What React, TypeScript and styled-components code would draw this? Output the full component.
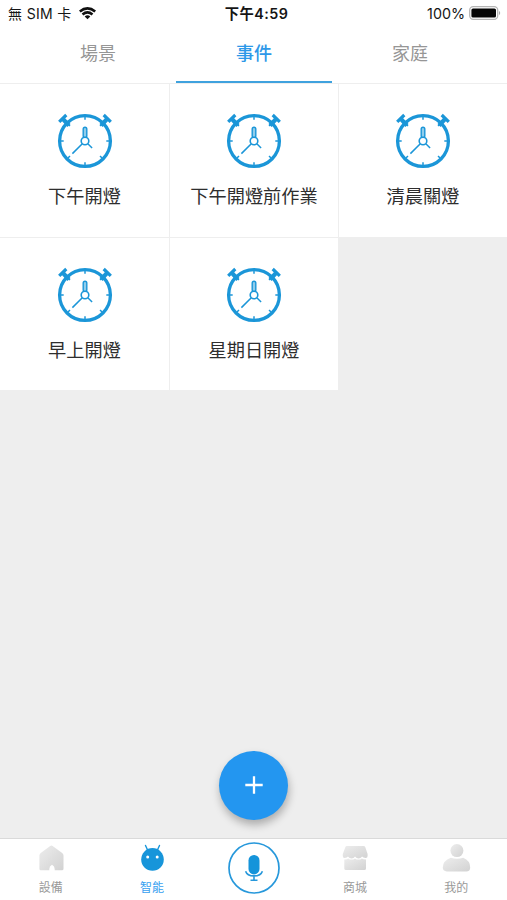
import React from "react";
import styled, { createGlobalStyle } from "styled-components";

const GlobalStyle = createGlobalStyle`
  *, *::before, *::after { box-sizing: border-box; }
  html, body { margin: 0; padding: 0; overflow: hidden; }
  body { font-family: Inter, "Noto Sans CJK TC", sans-serif; }
  svg { display: block; flex: none; }
`;

const Screen = styled.div`
  display: flex;
  flex-direction: column;
  width: 507px;
  height: 900px;
  background: #eeeeee;
`;

const StatusBar = styled.header`
  display: grid;
  grid-template-columns: 1fr auto 1fr;
  align-items: center;
  height: 28px;
  padding: 0 6px 0 8px;
  background: #fff;
  color: #151515;
  font-size: 14px;
  line-height: 28px;
  white-space: nowrap;
`;

const Carrier = styled.div`
  display: flex;
  align-items: center;
  gap: 7px;
  letter-spacing: 0.35px;
  svg { margin-top: -2px; }
`;

const Clock = styled.div`
  padding-left: 4px;
  font-weight: 600;
  font-size: 14.3px;
  letter-spacing: 0.45px;
`;

const Power = styled.div`
  display: flex;
  align-items: center;
  justify-content: flex-end;
  gap: 4px;
  font-size: 14.3px;
  svg { margin-top: -2px; }
`;

const Tabs = styled.nav`
  display: grid;
  grid-template-columns: repeat(3, 156px);
  height: 55px;
  padding-left: 20px;
  background: #fff;
`;

const Tab = styled.button<{ $active?: boolean }>`
  display: flex;
  align-items: center;
  justify-content: center;
  border: 0;
  border-bottom: 2px solid ${(p) => (p.$active ? "#3fa2de" : "transparent")};
  padding: 0 0 5px;
  background: none;
  color: ${(p) => (p.$active ? "#2d98e8" : "#969696")};
  font: ${(p) => (p.$active ? 500 : 400)} 18px/26px "Noto Sans CJK TC", sans-serif;
`;

const Events = styled.main`
  display: grid;
  grid-template-columns: 169px 168px 168px;
  grid-template-rows: 153px 152px;
  gap: 1px;
  padding-top: 1px;
  flex: 1;
  align-content: start;
`;

const EventCard = styled.article`
  display: flex;
  flex-direction: column;
  align-items: center;
  padding-top: 26px;
  background: #fff;
`;

const EventName = styled.span`
  margin-top: 10px;
  color: #2e2e2e;
  font: 400 18.2px/26px "Noto Sans CJK TC", sans-serif;
  white-space: nowrap;
`;

const AddRow = styled.div`
  display: flex;
  justify-content: center;
  height: 87px;
`;

const AddButton = styled.button`
  display: flex;
  align-items: center;
  justify-content: center;
  width: 69px;
  height: 69px;
  border: 0;
  border-radius: 50%;
  padding: 0 0 1px;
  background: #2396f0;
  box-shadow: 1px 5px 8px rgba(0, 0, 0, 0.28);
`;

const BottomBar = styled.footer`
  display: grid;
  grid-template-columns: repeat(5, 1fr);
  height: 62px;
  border-top: 1px solid #dadada;
  background: #fff;
`;

const NavItem = styled.button<{ $active?: boolean }>`
  display: flex;
  flex-direction: column;
  align-items: center;
  border: 0;
  padding: 4px 0 0;
  background: none;
  color: ${(p) => (p.$active ? "#389ff0" : "#999")};
  font: 400 12px/18px "Noto Sans CJK TC", sans-serif;
  gap: 5px;
`;

const MicItem = styled(NavItem)`
  padding: 3px 0 0 1px;
`;

const ticks = [0, 45, 90, 135, 180, 225, 270, 315];

function AlarmIcon() {
  return (
    <svg width="58" height="62" viewBox="0 0 58 62" fill="none" stroke="#1b96d8">
      <circle cx="29" cy="31" r="25.4" strokeWidth="3.3" />
      <path d="M3.2 11.8 10.3 5M47.7 5 54.8 11.8" strokeWidth="3.2" />
      <path d="M6.5 8.5 13 15.5M51.5 8.5 45 15.5" strokeWidth="4.2" />
      {ticks.map((angle) => (
        <path key={angle} d="M29 7v2.7" strokeWidth="1.5" transform={`rotate(${angle} 29 31)`} />
      ))}
      <rect x="27.2" y="17.3" width="3.6" height="10.5" rx="1.8" strokeWidth="1.4" fill="#8fcdec" />
      <path d="M26.3 33.7 16.4 43.6M31.8 33.8 36.1 38" strokeWidth="1.5" />
      <circle cx="29" cy="31" r="3.8" strokeWidth="1.6" fill="#fff" />
    </svg>
  );
}

function WifiIcon() {
  return (
    <svg width="17" height="13" viewBox="0 0 17 13" fill="none" stroke="#101010" strokeWidth="2.6">
      <path d="M.8 4.6Q8.5-1.7 16.2 4.6M3.5 7.5q5-4.1 10 0" />
      <path d="M8.5 12.2 5.7 9.4q2.8-2.4 5.6 0z" fill="#101010" stroke="none" />
    </svg>
  );
}

function BatteryIcon() {
  return (
    <svg width="32" height="14" viewBox="0 0 32 14">
      <rect x=".7" y=".7" width="28" height="12.6" rx="3.5" fill="#fff" stroke="#b5b5b5" strokeWidth="1.3" />
      <rect x="2.4" y="2.4" width="24.6" height="9.2" rx="1.6" fill="#050505" />
      <path d="M30 5q1.2.5 1.2 2T30 9z" fill="#aaa" />
    </svg>
  );
}

function PlusIcon() {
  return (
    <svg width="18" height="18" viewBox="0 0 18 18" stroke="#fff" strokeWidth="2.3">
      <path d="M9 .3v17.4M.3 9h17.4" />
    </svg>
  );
}

function Shade({ id }: { id: string }) {
  return (
    <defs>
      <linearGradient id={id} x1="0" y1="0" x2="1" y2="1">
        <stop offset="0" stopColor="#ededed" />
        <stop offset="1" stopColor="#d2d2d2" />
      </linearGradient>
    </defs>
  );
}

function HomeIcon() {
  return (
    <svg width="30" height="30" viewBox="0 0 30 30">
      <Shade id="homeShade" />
      <path fill="url(#homeShade)" d="M14.2 2.9q1.2-.9 2.4 0L26.2 10q1.3 1 1.3 2.5v13.2q0 1.5-1.5 1.5h-7.3v-1.2q0-3-2.7-4.2-2.7 1.2-2.7 4.2v1.2H4.9q-1.5 0-1.5-1.5V12.5q0-1.5 1.3-2.5z" />
    </svg>
  );
}

function RobotIcon() {
  return (
    <svg width="30" height="30" viewBox="0 0 30 30">
      <circle cx="15.5" cy="16.4" r="11.3" fill="#1795da" />
      <path d="M10.5 6.8 8.5 2.5M20.5 6.8l2-4.3" stroke="#1795da" strokeWidth="1.4" strokeLinecap="round" />
      <circle cx="10.7" cy="14" r="1.5" fill="#fff" />
      <circle cx="20.2" cy="14" r="1.5" fill="#fff" />
    </svg>
  );
}

function MicIcon() {
  return (
    <svg width="52" height="52" viewBox="0 0 52 52" fill="none" stroke="#2798db">
      <circle cx="26" cy="26" r="25" strokeWidth="1.7" />
      <rect x="20.5" y="13" width="11" height="19.4" rx="5.5" fill="#1594da" stroke="none" />
      <path d="M17.6 29.2a8.6 6 0 0 0 16.8 0M26 34.6v3.5M22.5 38.2h7" strokeWidth="1.6" />
    </svg>
  );
}

function StoreIcon() {
  return (
    <svg width="30" height="30" viewBox="0 0 30 30">
      <Shade id="storeShade" />
      <path fill="url(#storeShade)" d="M7 3h16.5q1.3 0 1.8 1.2l2.3 6.8v2q0 2-2 2-2.5 0-3.5-1.4-1.5 2-3.5 2-2.2 0-3.6-2-1.2 2-3.4 2t-3.6-2q-1 1.4-3.5 1.4-1.7 0-1.7-2v-2l2.5-6.8Q5.7 3 7 3z" />
      <path fill="url(#storeShade)" d="M4.3 16.4q2.5.1 4-1 1.4 1.2 3.4 1.2 1.7 0 3.3-1.2 1.5 1.2 3.4 1.2 2 0 3.4-1.2 1.5 1 4.2 1v9q0 1.7-1.7 1.7H6q-1.7 0-1.7-1.7z" />
    </svg>
  );
}

function UserIcon() {
  return (
    <svg width="30" height="30" viewBox="0 0 30 30">
      <Shade id="userShade" />
      <circle cx="15.9" cy="7.6" r="6.5" fill="url(#userShade)" />
      <path fill="url(#userShade)" d="M9.8 14.8q6.2 2 12.4 0 7 2.9 7 9.6 0 4-4 4H5.8q-4 0-4-3.8 0-6.9 8-9.8z" />
    </svg>
  );
}

const events = ["下午開燈", "下午開燈前作業", "清晨關燈", "早上開燈", "星期日開燈"];

export default function App() {
  return (
    <>
      <GlobalStyle />
      <Screen>
        <StatusBar>
          <Carrier><span>無 SIM 卡</span><WifiIcon /></Carrier>
          <Clock>下午4:59</Clock>
          <Power><span>100%</span><BatteryIcon /></Power>
        </StatusBar>
        <Tabs>
          <Tab>場景</Tab>
          <Tab $active>事件</Tab>
          <Tab>家庭</Tab>
        </Tabs>
        <Events>
          {events.map((name) => (
            <EventCard key={name}>
              <AlarmIcon />
              <EventName>{name}</EventName>
            </EventCard>
          ))}
        </Events>
        <AddRow><AddButton aria-label="新增"><PlusIcon /></AddButton></AddRow>
        <BottomBar>
          <NavItem><HomeIcon />設備</NavItem>
          <NavItem $active><RobotIcon />智能</NavItem>
          <MicItem aria-label="語音"><MicIcon /></MicItem>
          <NavItem><StoreIcon />商城</NavItem>
          <NavItem><UserIcon />我的</NavItem>
        </BottomBar>
      </Screen>
    </>
  );
}
